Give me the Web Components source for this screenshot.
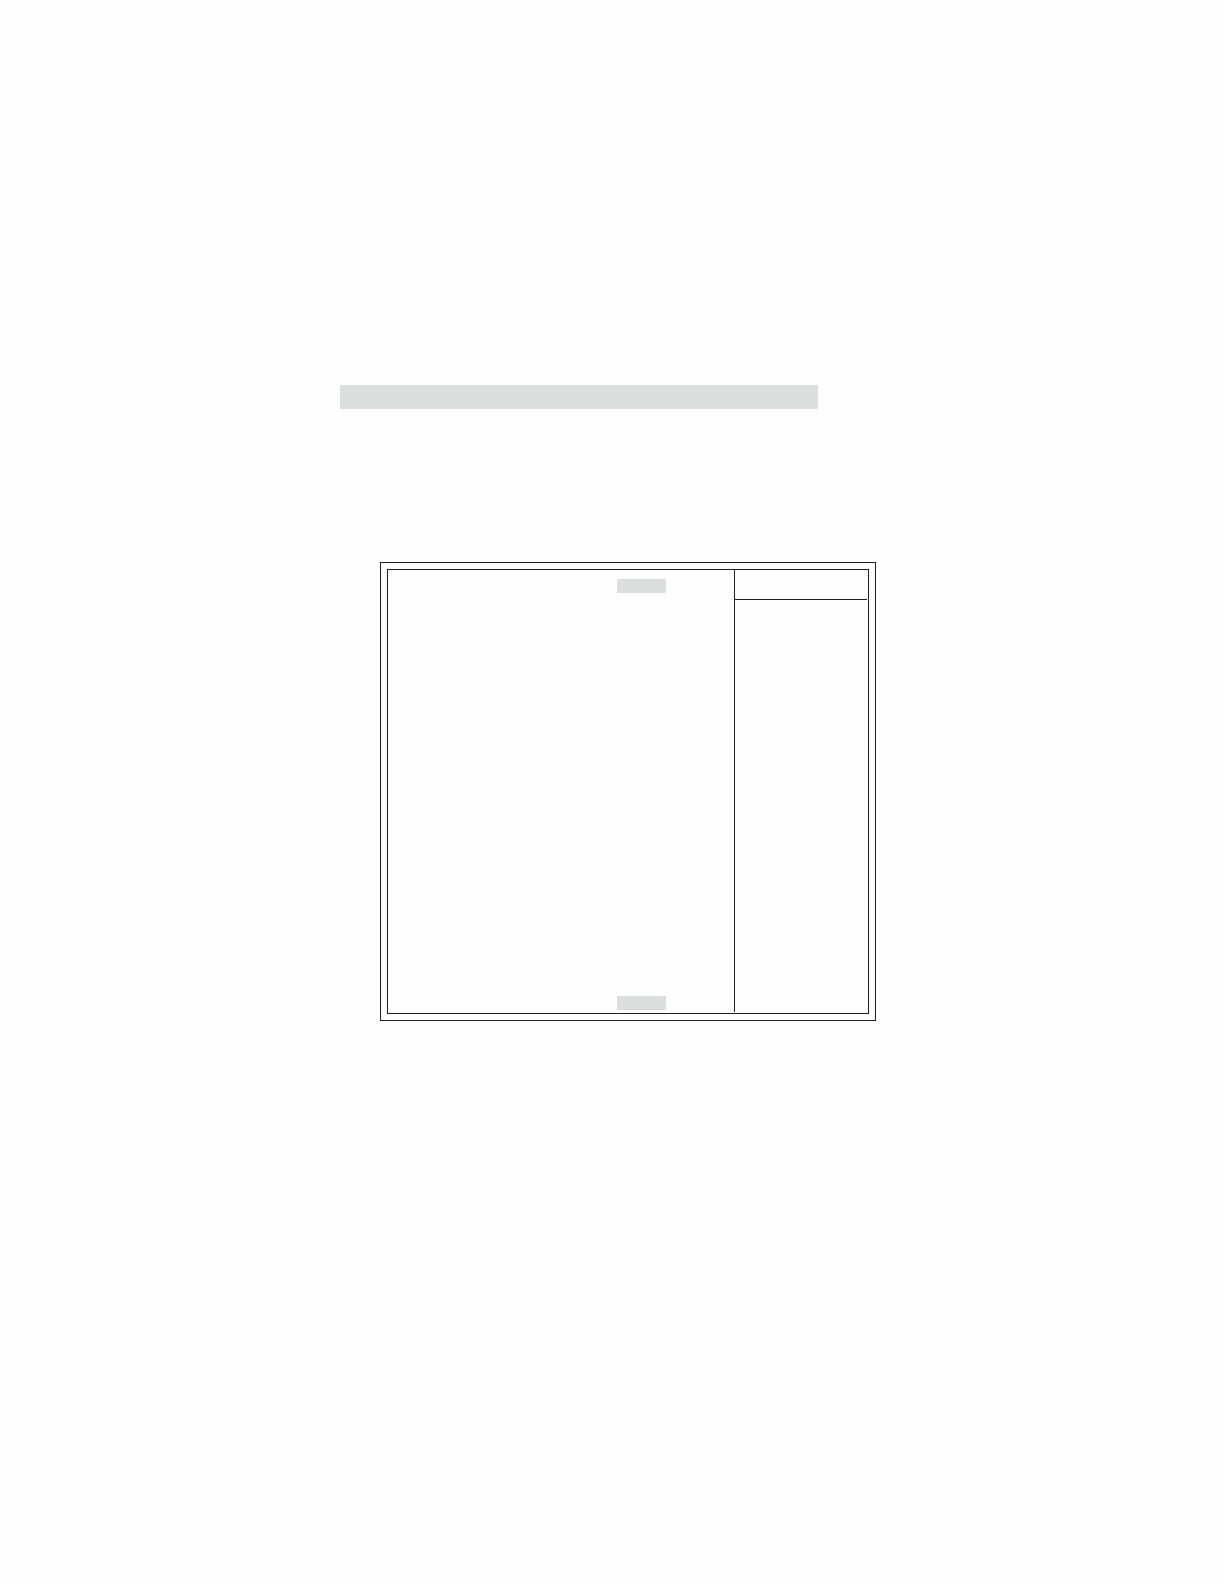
<!DOCTYPE html>
<html lang="en">
<head>
    <meta charset="utf-8">
    <meta name="viewport" content="width=device-width, initial-scale=1">
    <title>Setup screen</title>
    <style>
        body {
            margin: 0;
            background-color: #fefefe;
            font-family: "Liberation Sans", sans-serif;
        }
    </style>
</head>
<body>

<manual-page>
    <shade-bar slot="heading"></shade-bar>
    <setup-screen>
        <shade-bar class="mark"></shade-bar>
        <shade-bar class="mark"></shade-bar>
        <help-panel slot="side"></help-panel>
    </setup-screen>
</manual-page>

<script>
const pageTemplate = document.createElement('template')

pageTemplate.innerHTML = `
    <style>
    :host {
        display: flex;
        flex-direction: column;
        gap: 153px;
        box-sizing: border-box;
        min-height: 100vh;
        padding-top: 385px;
    }

    .heading {
        display: grid;
        grid-template-columns: 340fr 478fr 406fr;
    }

    .figure {
        display: grid;
        grid-template-columns: 380fr 496fr 348fr;
    }

    ::slotted(*) {
        grid-column: 2;
    }
    </style>

    <header class="heading"><slot name="heading"></slot></header>
    <main class="figure"><slot></slot></main>
`

class ManualPage extends HTMLElement {
    constructor() {
        super();
        this.attachShadow({ mode: 'open' });
        this.shadowRoot.appendChild(pageTemplate.content.cloneNode(true))
    }
}

const barTemplate = document.createElement('template')

barTemplate.innerHTML = `
    <style>
    :host {
        display: block;
        height: 24px;
        background-color: #dcdddd;
    }

    :host(.mark) {
        width: 49px;
        height: 14px;
    }
    </style>
`

class ShadeBar extends HTMLElement {
    constructor() {
        super();
        this.attachShadow({ mode: 'open' });
        this.shadowRoot.appendChild(barTemplate.content.cloneNode(true))
    }
}

const screenTemplate = document.createElement('template')

screenTemplate.innerHTML = `
    <style>
    :host {
        display: block;
        padding: 6px;
        border: 1px solid #231f20;
    }

    .inner {
        display: grid;
        grid-template-columns: 346fr 134fr;
        min-height: 443px;
        border: 1px solid #231f20;
    }

    /* one mark at each end of the column */
    .items {
        display: flex;
        flex-direction: column;
        justify-content: space-between;
        align-items: flex-end;
        padding: 9px 68px 3px 0;
    }
    </style>

    <div class="inner">
        <section class="items"><slot></slot></section>
        <slot name="side"></slot>
    </div>
`

class SetupScreen extends HTMLElement {
    constructor() {
        super();
        this.attachShadow({ mode: 'open' });
        this.shadowRoot.appendChild(screenTemplate.content.cloneNode(true))
    }
}

const helpTemplate = document.createElement('template')

helpTemplate.innerHTML = `
    <style>
    :host {
        display: block;
        margin-bottom: 1px;
        padding-right: 1px;
        border-left: 1px solid #231f20;
    }

    .head {
        height: 29px;
        border-bottom: 1px solid #231f20;
    }
    </style>

    <div class="head"></div>
`

class HelpPanel extends HTMLElement {
    constructor() {
        super();
        this.attachShadow({ mode: 'open' });
        this.shadowRoot.appendChild(helpTemplate.content.cloneNode(true))
    }
}

customElements.define('manual-page', ManualPage);
customElements.define('shade-bar', ShadeBar);
customElements.define('setup-screen', SetupScreen);
customElements.define('help-panel', HelpPanel);
</script>
</body>
</html>
